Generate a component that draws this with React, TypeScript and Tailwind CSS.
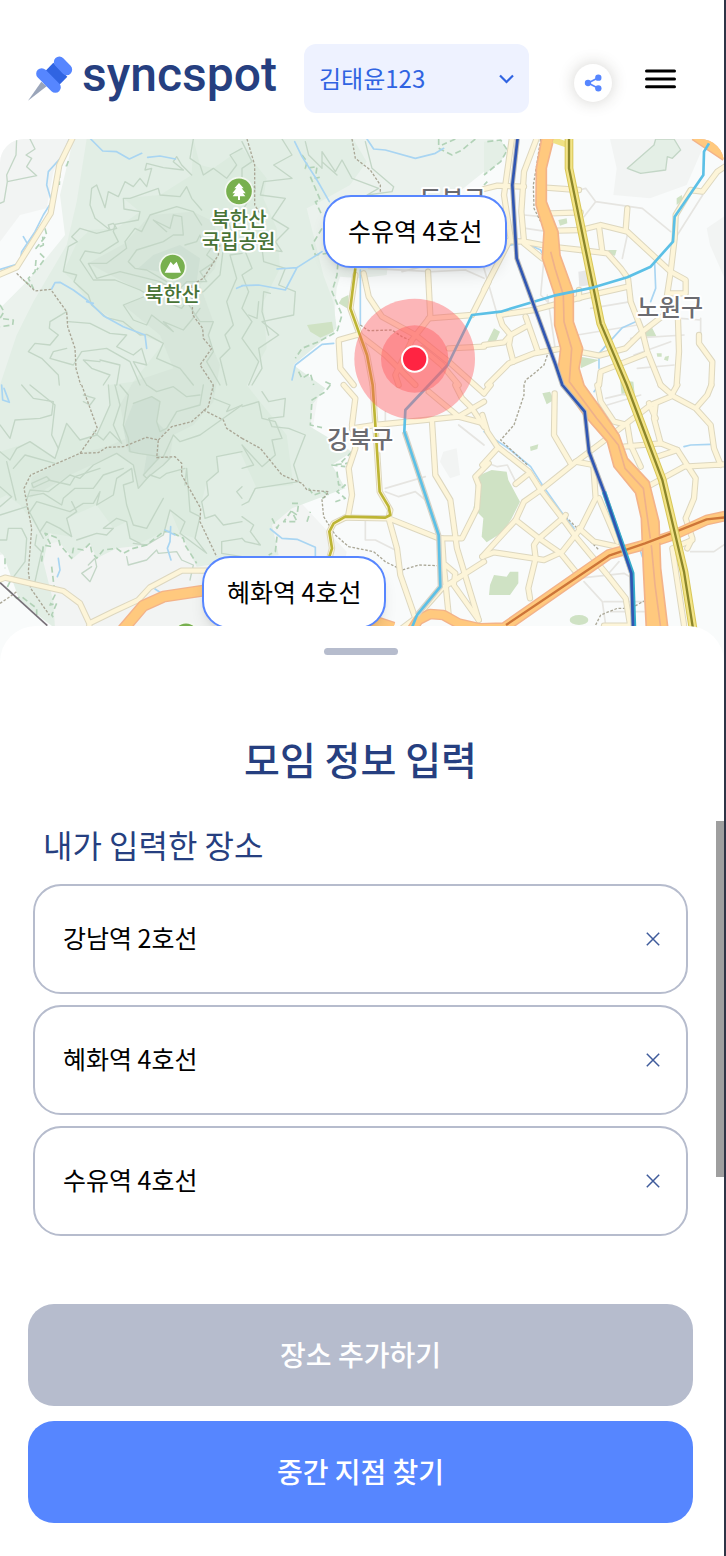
import { useState } from "react";

type Sheet = {
  x: number;
  y: number;
  contours: string[];
  trails: string[];
  edges: string[];
  streams: string[];
  lanes: string[];
  roads: string[];
};

const sheets: Sheet[] = [
  {
    x: 0,
    y: 0,
    contours: [
      "M50 12L48 60L20 120L22 140L110 122L80 95L95 70L78 60L105 42L90 12M22 140L12 200L0 205",
      "M575 120L545 90L530 65L520 80L550 105L490 98L440 85L435 105L455 100L440 155L420 130L400 155L375 140L355 185L325 170L315 218L290 150L275 160L270 210L285 250L330 285L325 270L340 265L350 280L290 295L240 280L215 305L232 320L205 335L190 410L230 420L222 440L265 480L275 510L320 548L370 560L420 600L440 598L490 625L470 670L540 700L580 750",
      "M605 225L575 190L560 155L540 185L480 180L475 160L390 190L370 190L372 222L420 230L415 255L345 268L340 290L355 320L300 355L255 348L240 375L280 435L345 435L420 465L445 480L370 510L400 555L440 570L455 540L520 590L490 560L550 585L575 555L600 520",
      "M605 270L580 230L530 215L450 240L425 290L405 280L375 320L380 340L320 385L265 385L290 430L360 410L480 440L530 470L510 505L545 520L560 500L600 560L640 560L625 600L640 650L620 680L660 750",
      "M555 330L590 320L600 300L610 335L640 330L620 360L645 380L600 410L620 440L560 440L520 480",
      "M500 290L460 255L510 280L520 240L545 245L550 300L520 300L490 320L410 345L385 380L405 400L440 405L500 440",
      "M726 235L685 260L700 300L670 340L660 420L610 470L580 480M726 355L690 360L710 430L680 500L700 570L675 600L690 640L660 670L680 750",
      "M200 530L150 560L148 580L175 600L150 630L105 625L85 650L125 670L175 720L178 750",
      "M205 560L270 565L330 595L380 600L350 635L400 660L425 640L440 690L400 680L440 750",
      "M200 640L160 650L150 670L220 690L245 650L320 640L390 680L420 750M300 680L250 675L275 700L330 720L310 750M300 675L360 690L350 750",
      "M726 40L690 60L710 90L680 130L640 100L610 120L600 90L570 70L580 12",
    ],
    trails: ["M50 415L105 468L152 463L200 530L203 575L225 640L228 700L242 750", "M665 290L655 360L610 430L575 450L578 540L608 580L610 610L635 640L600 690L640 750"],
    edges: ["M205 78L200 92L180 90L178 150", "M135 280L140 300L108 340L130 330L128 305", "M120 355L135 370L110 405M108 375L105 410L85 430L100 460L65 430", "M0 510L12 530L0 550L40 555L38 570L0 575"],
    streams: ["M272 12L308 48L350 50L388 72L425 55M443 67L480 63L526 72", "M208 12L190 60L145 110L140 150L155 200L130 240L105 290L65 350L60 385L0 403M70 305L80 322", "M155 462L165 443L180 442L220 465L265 498L310 542L370 575L435 600L440 640M260 500L280 505", "M726 453L710 460"],
    lanes: [],
    roads: ["M222 0L178 90L152 235L50 397L-10 422"],
  },
  {
    x: 726,
    y: 0,
    contours: [
      "M0 20L30 80L0 100L0 130L40 160L0 230",
      "M120 12L150 60L95 90L150 130L65 140L55 180L130 190L90 250L140 280L100 320L120 350L60 340L65 380L130 400L110 450L160 470L155 540L60 560L110 600L50 640L60 700L30 750",
      "M40 290L10 350L30 400L0 420L20 470L0 520L30 560L0 610L50 680L20 750",
      "M85 475L65 470L60 530L80 600M50 500L45 550L20 540",
      "M190 20L200 60L240 100L240 50L280 110L300 75L330 130L410 160L375 180L450 170L455 155L390 100L370 20M240 80L285 120",
    ],
    trails: ["M15 12L38 90L38 210L70 260", "M330 12L340 70L385 105L415 150L415 175", "M355 570L380 587L450 585L480 605L515 620"],
    edges: ["M180 60L195 80L190 100L225 95L220 130L240 125M205 125L235 195L220 200L240 240", "M240 280L210 330L220 360L290 350L285 420L270 470L300 540L285 590L230 620L180 640L160 670M170 710L180 730L205 715L215 750M250 740L270 750", "M590 12L590 40L630 60L660 45L700 12M640 12L600 30"],
    streams: ["M158 20L180 65L225 135L262 200", "M105 402L165 398L240 350M165 398L130 465L50 450L0 452", "M355 405L355 570", "M375 12L395 42L430 45L520 70L580 55L605 40", "M275 625L240 628L160 690L150 735"],
    lanes: ["M380 400L570 410L670 405L726 430", "M480 410L560 390"],
    roads: [
      "M365 415L380 485L420 545L520 600L620 680L726 775",
      "M558 410L565 545L510 615L460 720L470 750",
      "M560 550L690 540L740 440",
      "M335 750L295 700L290 615L350 598L430 660L520 750",
      "M620 640L726 635",
      "M540 640L600 690L650 750M340 420L325 520L375 660L392 750",
    ],
  },
  {
    x: 1452,
    y: 0,
    contours: ["M430 100L510 30L515 12H570L590 45L565 70L550 65L545 105L470 115Z"],
    trails: ["M170 12L158 90L148 150L150 220L175 270", "M190 660L180 690L145 720L125 735L120 750"],
    edges: ["M10 20L50 15L70 45L50 80L0 120M0 150L10 140"],
    streams: ["M512 385L515 460L500 500", "M455 560L415 578L345 655L345 700M70 332L120 322L170 345L180 365", "M262 640L255 720"],
    lanes: ["M285 165L305 160L335 200L300 245M335 200L475 220L560 290M656 180L580 300M120 240L175 245M125 280L190 290M430 300L415 370M180 370L170 480L210 520M0 400L40 540M320 520L440 500M280 600L460 570M440 610L600 600M650 550L650 600M450 660L560 620M460 700L570 690M190 480L215 650M590 550L650 555"],
    roads: [
      "M85 0L60 180L80 310L0 465",
      "M0 162L40 152L120 155",
      "M162 0L120 110L112 230L120 320L75 318",
      "M185 158L285 165M200 235L290 232M220 287L290 285L350 270L430 290L560 410L605 435L605 475L555 475",
      "M430 220L425 285M345 275L355 350",
      "M120 320L200 335L290 345L370 355L410 400L432 430L440 500L475 590L490 650L530 750",
      "M120 325L175 370M285 490L285 465",
      "M432 455L300 485L150 525L45 540L55 570L80 600L75 630L88 680",
      "M0 630L60 622L80 600L125 575M125 545L160 645",
      "M10 750L75 685L150 655L235 640L345 662L425 640L475 590L540 540L560 410L572 310L575 240L620 165L655 170L700 110L730 90",
      "M582 555L585 650L578 750M645 600L645 625L685 680L682 750",
      "M345 750L350 710L490 655",
    ],
  },
  {
    x: 0,
    y: 750,
    contours: [
      "M0 120L30 160L45 105L120 100L155 90L160 50L100 40L65 0",
      "M0 200L30 225L50 190L90 170L165 220L200 115L240 165L290 150L330 60L325 0",
      "M90 0L165 60L155 150L175 190M250 30L285 40L270 60L250 50M345 0L360 60L340 120L365 175L330 140L310 165L280 140",
      "M40 250L75 210L165 235M0 305L35 335L0 365M20 230L48 345",
      "M80 345L90 315L145 320L210 270L240 280L280 240L350 205L400 240L415 310L450 270L480 280L500 265L555 250",
      "M100 308L95 295L140 275L150 285L100 308M145 285L210 300L225 275L300 250",
      "M90 380L110 350L210 380L250 355L280 355L300 320L290 360L340 330L350 280L395 250L400 290L370 300L380 360L400 420L440 430L490 340",
      "M120 440L140 410L180 430L215 455L200 400L230 380L215 350M230 465L290 445L320 450L340 430L310 430L350 400L380 410L390 460L420 475",
      "M80 335L130 325L185 360L190 340L225 310L280 310L310 270L370 250",
      "M360 0L385 30L370 120L385 160L390 200L415 205L480 215L430 270L440 280L490 240L510 220L490 215L520 150L540 170L600 150L726 60",
      "M400 55L455 35L480 50L470 110L480 140L500 130L530 80L600 60L610 0",
      "M440 0L470 20L520 5L560 35L600 30M640 40L690 60L680 80L726 60M640 0L640 20",
      "M726 200L650 215L655 260L620 290L625 330L605 350L615 400L645 390L670 420L726 410M726 305L710 320L726 340",
      "M555 300L560 250L570 380L600 395L585 460L620 505L540 445L555 410L510 375L490 450L440 480L400 475M726 460L665 470L665 505L726 515",
      "M0 465L20 465L25 430L65 430L80 460L75 530L30 590M110 450L105 480L125 500L105 590L85 590M0 390L80 365L130 460",
      "M265 540L285 520L290 545L270 590L245 565L275 545M380 515L385 540L440 525L470 495L475 505L530 500L545 525L580 540L570 585",
    ],
    trails: ["M245 0L292 130L240 205L92 270L72 310L95 430L85 560L92 610L148 690M240 205L295 203L320 187L370 185L440 157L475 165L470 218L525 215L545 235L545 270L602 370L600 410L650 515M475 165L515 125L575 110L625 65L640 0M610 75L670 105L680 130L726 160", "M0 655L30 635L50 620"],
    edges: ["M15 520L15 550M30 590L20 610L50 640L65 635L110 670L110 690M125 530L130 480L155 485L135 445L150 450L175 460L180 480L215 520L220 490L250 495L270 475L275 500L290 520L310 495L350 490L370 505L400 490L440 480L490 440L510 440L550 460L555 480L590 535M155 545L165 630L150 660L170 655L155 690L165 705"],
    streams: ["M5 0L8 45L28 52L12 10", "M512 425L510 470L502 490L513 525M495 435L525 450", "M175 520L180 555L172 575M465 612L485 625"],
    lanes: [],
    roads: ["M-10 588L15 578L90 595L190 618L240 655L268 715L340 680L415 645L450 607L545 557H620M268 715V760"],
  },
  {
    x: 726,
    y: 750,
    contours: [
      "M60 20L80 50L130 40L125 95L80 100L90 125L140 130L190 150L155 240L170 290L40 310L20 350L0 360",
      "M0 65L50 50L60 100L100 110L120 160L90 165L100 210L60 245L0 180M0 180L35 240L0 250",
      "M0 395L35 420L25 440L55 480L10 470L0 460",
    ],
    trails: ["M0 160L55 190L120 270L180 295L195 315L260 320L240 345L245 395L280 450L320 485L395 500L430 530L480 555L530 540L590 542"],
    edges: ["M265 0L250 20L210 45L205 120L240 128M330 200L300 230L320 235L270 240L310 245M285 260L290 300L310 300L285 320L310 340L280 350M200 310L215 330L245 320L260 330L240 340M150 355L170 355L165 390L150 380L165 410L125 410L150 375M195 410L205 380M90 400L105 430L115 410M105 455L100 500L80 510"],
    streams: ["M85 432L120 460L165 463L220 487V515"],
    lanes: ["M430 320L470 335L520 320L550 345L590 450M430 310L550 275M370 400L370 465L400 465L470 500M650 120L726 180M430 80V110"],
    roads: [
      "M305 0L340 40L330 120L340 190L320 250L330 330L318 395",
      "M330 130L400 120L650 95L726 50M560 20L650 95L726 115",
      "M570 110L580 270L625 345L645 490L710 705",
      "M440 400L465 490L475 570L520 700L480 730M310 398L440 400L590 460H660L705 370L710 300L700 275L740 235",
      "M600 460L605 540L620 690M520 700L600 610L726 530M605 535L640 565L635 600L710 705",
      "M640 0L660 40L690 70L726 125M392 0L402 150L413 320L445 375L440 398M310 398L275 415L262 440L270 490L262 520",
    ],
  },
  {
    x: 1452,
    y: 750,
    contours: [],
    trails: ["M120 0L120 30L90 120L50 165L130 240", "M245 395L280 430L345 495", "M335 720L350 690L400 670L440 670L480 648"],
    edges: [],
    streams: ["M0 140L20 155L80 195L140 245L175 300L235 385L270 430", "M600 185L620 180L680 178", "M330 20L345 0M470 500L475 515"],
    lanes: ["M280 580L420 565L445 580M300 590L355 650L365 720M360 650H480M380 680H480M370 570L405 530M620 500H690L726 475M365 40L450 20M370 60L470 30M0 230L40 245L70 240L90 280L100 300"],
    roads: [
      "M212 25L210 150L260 235",
      "M-5 90L10 140L40 185L135 260L170 315L235 400L275 455L370 570L425 640L440 730M-5 240L40 190M95 297L135 265M0 25L20 0",
      "M-5 515L40 465L95 405L120 350L170 315L270 235L350 175L500 60L560 35L580 0",
      "M95 405L165 460L230 505L275 560M235 400L160 465L150 480L155 520L133 610L138 640",
      "M-5 515L30 502L180 525L235 500L290 430L335 340L328 240L275 230",
      "M285 430L330 470L400 485M345 340L400 470M235 405L245 390",
      "M340 0L350 50L390 110L430 120L440 180L470 245M420 185L530 175L580 195L635 280L630 340L605 400L615 430L625 460L610 490",
      "M500 300L600 245L726 238M530 0L570 35L635 70L670 30L682 0M635 70L680 120L690 190L710 240",
      "M515 55L510 100L530 175M495 55L515 100M520 215L580 195M600 720L565 490L625 465M360 722H440",
    ],
  },
];

type Layer = "contours" | "trails" | "edges" | "streams" | "lanes" | "roads";

function SheetLayer({ layer, color, width, dash }: { layer: Layer; color: string; width: number; dash?: string }) {
  return (
    <g stroke={color} strokeWidth={width} strokeDasharray={dash} fill="none" strokeLinejoin="round" strokeLinecap={dash ? "butt" : "round"}>
      {sheets.map((sheet) => (
        <g key={`${sheet.x}-${sheet.y}`} transform={`translate(${sheet.x} ${sheet.y})`}>
          {sheet[layer].map((d) => (
            <path key={d} d={d} />
          ))}
        </g>
      ))}
    </g>
  );
}

const expressway =
  "M1627 0L1609 100L1608 210L1632 290L1627 370L1664 480L1664 570L1682 640L1674 710L1687 750L1752 840L1822 920L1842 995L1907 1075L1924 1150L1930 1300L1940 1500L2006 1500L1982 1300L1977 1160L1947 1040L1882 970L1857 900L1802 820L1752 750L1737 700L1748 640L1720 560L1720 470L1680 360L1674 290L1639 200L1639 100L1664 0Z";
const lineNavy = "M1554 0L1537 150L1550 370L1667 690L1687 750L1754 830L1767 950L1812 1070L1894 1315L1900 1500";
const lineCyan =
  "M2127 25L2112 50L2110 120L2024 245L2019 320L1952 395L1882 427L1782 457L1662 482L1502 530L1416 540L1343 690L1216 825L1213 890L1316 1200L1321 1355L1251 1440L1235 1480";
const lineOlive = "M1707 0V100L1802 565L1880 750L1987 1035L2052 1310L2082 1500";
const lineGold =
  "M1066 400L1051 520L1101 660L1118 750L1128 900L1139 1070L1166 1115L1171 1140L1156 1148L1036 1145L1001 1165L988 1190L996 1240L988 1265";
const southRoad = "M1225 1500L1255 1455L1290 1437L1330 1440L1375 1465L1440 1480L1512 1478L1827 1258L1932 1230L2022 1200L2120 1155L2190 1140";

function DistrictMap() {
  return (
    <svg aria-hidden="true" className="absolute inset-0 h-full w-full" viewBox="0 12 2172 1566" preserveAspectRatio="xMinYMin slice">
      <rect width="2178" height="1600" fill="#f9fbfb" />
      <path fill="#f2f4f3" d="M0 12H210L160 110L140 220L60 240L0 320ZM0 900L165 1500H1000L1040 1250L900 1100L960 750L0 800ZM1850 100L1840 180L1950 190L2060 150L2120 12H1830ZM2178 240L2120 280L2130 330L2178 440ZM1330 950L1370 940L1380 1020L1350 1030L1320 980Z" />
      <path fill="#ebf2ed" d="M220 12H1480L1500 70L1440 120L1340 200L1180 250L1160 420L1080 430L1020 425L1010 460L1000 590L880 690L860 780L700 1100L0 1260V520L40 480L90 430L195 300L180 180Z" />
      <path fill="#e2eee5" d="M260 12H1060L1100 80L1050 150L960 200L920 220L970 420L1000 500L1010 580L880 690L976 760L936 810L931 875L1056 950L996 990L1036 1060L876 1120L816 1170L836 1260L590 1295L550 1210L500 1190L440 1230L350 1240L290 1270L270 1225L220 1270L150 1190L130 1280L160 1400L165 1480L60 1400L10 1260L0 1250V750L50 600L100 500L200 330L230 200Z" />
      <path fill="#dcebdf" d="M580 12L600 90L640 100L726 40L760 80L800 130L790 190L830 280L840 400L790 500L800 640L740 750L860 900L880 1050L770 1060L720 950L650 965L655 1010L620 1040L605 1100L585 1210L540 1195L510 1125L490 1190L420 1225L390 1210L380 1160L340 1180L290 1110L200 1150L215 1205L120 1190L60 1110L20 1080L0 1090V950L90 920L165 970L200 865L240 915L290 900L330 810L325 750L400 740L490 625L420 600L270 510L222 440L190 410L232 320L270 285L350 280L420 230L370 190L480 180L575 120Z" />
      <path fill="#d7e6da" d="M450 240L580 230L640 260L660 330L645 400L600 450L640 560L625 610L660 690L640 800L580 870L520 900L510 970L440 1030L415 1060L400 990L350 955L210 1020L90 1090L95 1025L240 955L320 935L380 910L360 810L400 740L520 700L480 600L370 510L445 480L265 385L375 325Z" />
      <path fill="#cfe0d4" d="M400 805L455 785L480 800L470 860L500 890L475 915L480 970L430 1020L440 960L385 950L370 880ZM460 360L540 330L600 370L590 440L540 450L480 410L415 400Z" />
      <g fill="#cfe2c4">
        <path d="M1424 1030L1452 1015L1475 1005L1520 1010L1525 1035L1560 1100L1535 1150L1510 1190L1460 1222L1445 1205L1450 1150L1420 1120L1430 1080Z" />
        <path d="M1482 1320L1520 1325L1530 1310L1555 1310L1555 1345L1530 1380L1467 1380L1470 1350Z" />
        <ellipse cx="1737" cy="1455" rx="28" ry="15" />
        <path d="M1627 775L1650 770L1662 795L1640 808ZM1462 620L1482 580L1500 590L1487 620ZM1937 590L1952 570L1970 605L1932 605ZM1742 665L1797 675L1742 700ZM1675 255L1700 250L1702 265L1680 272ZM1825 345L1850 345L1845 362L1825 358ZM1025 490L1045 480L1050 525L1016 505ZM921 570L996 560L1001 590L961 608L931 590ZM1860 735L1900 740L1905 785L1865 780ZM1590 935L1615 928L1612 942L1592 948ZM1970 655L1985 655L1985 665L1972 665ZM1995 665L2007 662L2004 678L1992 674ZM2030 190L2045 180L2050 195L2030 210Z" />
      </g>
      <path fill="#e4efe6" d="M1882 100L1962 30L1967 12H2022L2042 45L2017 70L2002 65L1997 105L1922 115ZM1452 20L1502 15L1522 45L1502 80L1452 120Z" />
      <path fill="#e6e7e7" d="M1735 410L1765 405L1770 450L1738 455Z" />

      <SheetLayer layer="contours" color="#c3d6c6" width={4} />
      <SheetLayer layer="lanes" color="#e6e5e1" width={5} />
      <SheetLayer layer="edges" color="#b2d2b7" width={5} dash="18 10" />
      <SheetLayer layer="streams" color="#a9d5f2" width={5} />
      <SheetLayer layer="trails" color="#aaa796" width={4} dash="8 5" />
      <SheetLayer layer="roads" color="#ddd7bf" width={19} />
      <SheetLayer layer="roads" color="#fdf5d9" width={13} />

      <path d="M0 1343L142 1472" stroke="#777078" strokeWidth="5" />
      <g fill="none" strokeLinejoin="round">
        <path d="M2085 0L2178 62M355 1500L430 1412L490 1385L610 1367L780 1350L1110 1455L1180 1478" stroke="#f3b389" strokeWidth="36" />
        <path d="M2085 0L2178 62M355 1500L430 1412L490 1385L610 1367L780 1350L1110 1455L1180 1478" stroke="#ffc97e" strokeWidth="28" />
        <path d={southRoad} stroke="#f3b389" strokeWidth="32" />
        <path d={southRoad} stroke="#ffc97e" strokeWidth="24" />
        <path d={expressway} fill="#ffc97e" stroke="#f3b389" strokeWidth="5" />
        <path d="M1652 350L1665 400L1690 480L1692 560L1715 640L1708 740L1790 850L1855 930L1875 1000L1930 1060L1955 1240L1965 1350L1985 1500" stroke="#efb18a" strokeWidth="5" />
        <path d="M1920 1230L2010 1204" stroke="#ffc97e" strokeWidth="20" />
        <path d="M1518 1470L1827 1262L1935 1225L2022 1192L2120 1153L2178 1147" stroke="#cd7538" strokeWidth="7" />
        <path d="M1660 15L1710 32" stroke="#f0e184" strokeWidth="18" />
        <path d={lineOlive} stroke="#d8c658" strokeWidth="26" />
        <path d={lineOlive} stroke="#f3e487" strokeWidth="20" />
        <path d={lineOlive} stroke="#8b852a" strokeWidth="7" />
        <path d={lineGold} stroke="#bdb535" strokeWidth="8" />
        <path d="M1213 890L1316 1200L1321 1355L1251 1440" stroke="#d6d3c7" strokeWidth="16" />
        <path d={lineCyan} stroke="#5cc0e6" strokeWidth="8" />
        <path d={lineNavy} stroke="#b9bab9" strokeWidth="14" />
        <path d="M1812 1070L1897 1315L1903 1500" stroke="#34abca" strokeWidth="13" />
        <path d={lineNavy} stroke="#3056b2" strokeWidth="8" />
      </g>

      <circle cx="717" cy="169" r="41" fill="#78b04f" stroke="#f3f8f0" strokeWidth="5" />
      <path fill="#fff" d="M717 144L731 160H725L737 175H729L736 184H720V195H714V184H698L705 175H697L709 160H703Z" />
      <circle cx="518" cy="396" r="39" fill="#78b04f" stroke="#f3f8f0" strokeWidth="5" />
      <path fill="#fff" d="M494 413L512 380L520 390L530 380L543 413Z" />
      <circle cx="558" cy="1502" r="39" fill="#78b04f" stroke="#f3f8f0" strokeWidth="5" />
      <g className="font-['Noto_Sans_CJK_KR',sans-serif] font-medium" textAnchor="middle" paintOrder="stroke" stroke="#fff" strokeWidth="12" strokeLinejoin="round">
        <g fill="#477336" fontSize="60">
          <text>
            <tspan x="717" y="275">북한산</tspan>
            <tspan x="716" y="342">국립공원</tspan>
          </text>
          <text x="518" y="502">북한산</text>
        </g>
        <g fill="#6b6b70" fontSize="72">
          <text x="1358" y="220">도봉구</text>
          <text x="2010" y="543">노원구</text>
          <text x="1081" y="938">강북구</text>
        </g>
      </g>

      <circle cx="1244" cy="672" r="181" fill="#ff5a5f" fillOpacity="0.43" />
      <circle cx="1244" cy="672" r="101" fill="#ff5a5f" fillOpacity="0.45" />
      <circle cx="1244" cy="672" r="38" fill="#ff2442" stroke="#fff" strokeWidth="6" />
    </svg>
  );
}

function PinLogo() {
  return (
    <svg aria-hidden="true" className="h-[45px] w-[45px] shrink-0" viewBox="84 79 135 135">
      <path fill="#9aa5ba" d="M84 213L124 156L140 170Z" />
      <path fill="#3064e2" d="M137 123L160 99L202 141L177 167Z" />
      <path d="M178 97L200 120M125 132L166 173" stroke="#5686ff" strokeWidth="33" strokeLinecap="round" />
    </svg>
  );
}

function ShareIcon() {
  return (
    <svg aria-hidden="true" className="h-[18px] w-[18px]" viewBox="852 131 54 54">
      <path d="M895 142L864 158L895 174" fill="none" stroke="#5686ff" strokeWidth="5" />
      <circle cx="864" cy="158" r="9.5" fill="#5686ff" />
      <circle cx="895" cy="142" r="9.5" fill="#5686ff" />
      <circle cx="895" cy="174" r="9.5" fill="#5686ff" />
    </svg>
  );
}

function StationLabel({ name, className }: { name: string; className: string }) {
  return (
    <div className={`absolute flex h-[73px] items-center rounded-[28px] border-2 border-[#5786ff] bg-white px-[23px] pb-[2px] text-[25px] whitespace-nowrap shadow-lg ${className}`}>
      {name}
    </div>
  );
}

export default function App() {
  const [places, setPlaces] = useState(["강남역 2호선", "혜화역 4호선", "수유역 4호선"]);

  return (
    <div className="relative border-r-2 border-[#2f3446] bg-white font-['Noto_Sans_CJK_KR',sans-serif] text-black">
      <header className="flex h-[139px] items-center pt-[18px] pr-12 pl-7">
        <a href="#home" className="flex items-center gap-[9px]">
          <PinLogo />
          <span className="w-[194px] pb-[8px] font-['Roboto',sans-serif] text-[48px] leading-[52px] font-medium text-[#263f80]">syncspot</span>
        </a>
        <div className="relative ml-7 w-[225px]">
          <select aria-label="모임" className="block h-[69px] w-full appearance-none rounded-xl bg-[#eef2ff] pr-10 pb-[2px] pl-[15px] text-2xl text-[#3064e2]">
            <option>김태윤123</option>
          </select>
          <svg aria-hidden="true" className="pointer-events-none absolute top-[30px] right-[15px] h-[10px] w-[15px]" viewBox="0 0 15 10">
            <path d="M1 1.5L7.5 8L14 1.5" fill="none" stroke="#3064e2" strokeWidth="2.2" />
          </svg>
        </div>
        <button type="button" aria-label="공유" className="mt-2 ml-auto flex h-[38px] w-[38px] items-center justify-center rounded-full bg-white shadow-[0_0_16px_rgba(60,55,40,0.22)]">
          <ShareIcon />
        </button>
        <button type="button" aria-label="메뉴" className="ml-[33px]">
          <svg aria-hidden="true" className="h-5 w-[31px]" viewBox="0 0 31 20">
            <path d="M1.5 2H29.5M1.5 10H29.5M1.5 17.7H29.5" stroke="#000" strokeWidth="3" strokeLinecap="round" />
          </svg>
        </button>
      </header>

      <section aria-label="지도" className="relative h-[522px] overflow-hidden rounded-t-[24px]">
        <DistrictMap />
        <StationLabel name="수유역 4호선" className="top-[56px] left-[323px]" />
        <StationLabel name="혜화역 4호선" className="top-[417px] left-[202px]" />
      </section>

      <main className="relative -mt-[35px] rounded-t-[36px] bg-white pt-[22px] pr-[31px] pb-[33px] pl-7">
        <div className="mx-auto h-[7px] w-[74px] rounded-full bg-[#b6bccd]" />
        <h1 className="mt-[75px] text-center text-[39px] leading-[56px] font-medium text-[#263f80]">모임 정보 입력</h1>
        <h2 className="mt-[34px] ml-[15px] text-[32px] leading-[48px] text-[#263f80]">내가 입력한 장소</h2>
        <ul className="mt-4 flex flex-col gap-[11px] px-[5px]">
          {places.map((place) => (
            <li key={place} className="flex h-[110px] items-center justify-between rounded-[28px] border-2 border-[#b6bccd] pr-[26px] pl-7 text-[25px]">
              <span className="pb-[2px]">{place}</span>
              <button type="button" aria-label={`${place} 삭제`} onClick={() => setPlaces(places.filter((p) => p !== place))}>
                <svg aria-hidden="true" className="h-[14px] w-[14px]" viewBox="0 0 14 14">
                  <path d="M0.8 0.8L13.2 13.2M13.2 0.8L0.8 13.2" stroke="#3f5b9b" strokeWidth="1.5" />
                </svg>
              </button>
            </li>
          ))}
        </ul>
        <div className="mt-[68px] flex flex-col gap-[15px] text-[28px] font-medium text-white">
          <button type="button" className="h-[102px] rounded-[26px] bg-[#b6bccd] pb-[2px]">장소 추가하기</button>
          <button type="button" className="h-[102px] rounded-[26px] bg-[#5686ff] pb-[2px]">중간 지점 찾기</button>
        </div>
      </main>

      <div aria-hidden="true" className="absolute top-[821px] right-0 h-[356px] w-2 bg-[#9f9f9f]" />
    </div>
  );
}
